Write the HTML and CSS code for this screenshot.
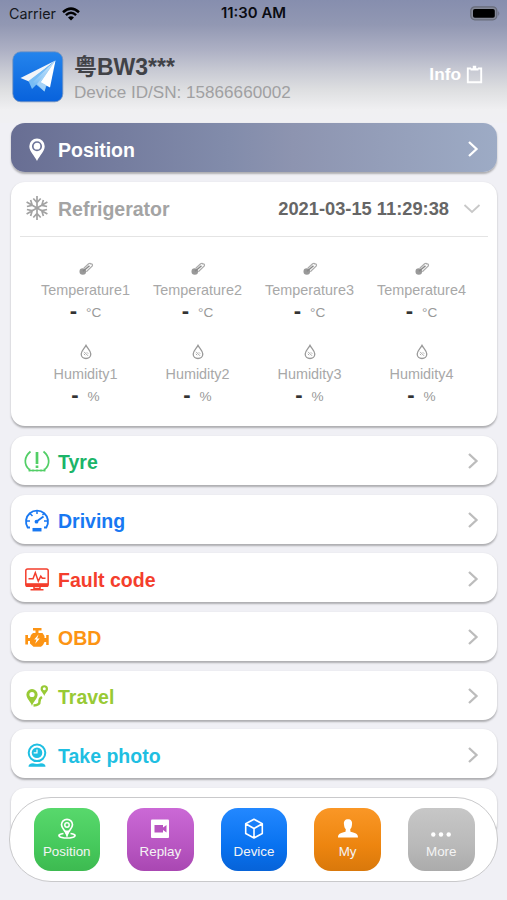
FILE: index.html
```html
<!DOCTYPE html>
<html lang="en">
<head>
<meta charset="utf-8">
<title>Device</title>
<link rel="stylesheet" href="styles.css">
</head>
<body>
<svg class="defs" width="0" height="0">
  <symbol id="chevron" viewBox="0 0 12 18"><path d="M2 2l7.5 7L2 16" fill="none" stroke="currentColor" stroke-width="2.3"/></symbol>
  <symbol id="thermo" viewBox="0 0 16 14"><circle cx="4.8" cy="9.5" r="3.3" fill="#999"/><path d="M5.8 6.2l4.800-4.400q1.600-1 2.200.2 2.300-.3 1.500 2L8.300 9.800" fill="none" stroke="#aaa" stroke-width="1.200"/><path d="M5 9.300l6.500-5.600" stroke="#888" stroke-width="1.500"/></symbol>
  <symbol id="drop" viewBox="0 0 12 16"><path d="M6 1.400C4.600 4.200 1.200 7 1.200 10a4.800 4.500 0 0 0 9.600 0C10.800 7 7.400 4.200 6 1.400z" fill="none" stroke="#999" stroke-width="1.300"/><path d="M4 7.800l4 4M3.800 9.800l1.400 1.400M6.800 8.300l1.400 1.400" stroke="#aaa"/></symbol>
</svg>
<header class="header">
  <div class="status">
    <span class="carrier">Carrier
      <svg width="18" height="14" viewBox="0 0 18 14" fill="none" stroke="#000" stroke-width="2.500"><path d="M1 5.200q8-7.200 16 0M3.900 8.100q5.100-4.600 10.200 0"/><path d="M9 13.400L6 10.400q3-2.400 6 0z" fill="#000" stroke="none"/></svg>
    </span>
    <span class="clock">11:30 AM</span>
    <svg class="battery" width="31" height="15" viewBox="0 0 31 15"><rect x=".8" y=".8" width="26" height="13" rx="4" fill="#858998" stroke="#686c7b" stroke-width="1.300"/><rect x="3" y="3" width="21.800" height="8.800" rx="1.800"/><path d="M28.300 5v5q2-2.500 0-5z" fill="#686c7b"/></svg>
  </div>
  <div class="device">
    <svg class="logo" width="52" height="52" viewBox="0 0 52 52">
      <defs><linearGradient id="sky" x2="0" y2="1"><stop stop-color="#2484ec"/><stop offset="1" stop-color="#0862dc"/></linearGradient><linearGradient id="wing" x2="0" y2="1"><stop stop-color="#d8edfc"/><stop offset="1" stop-color="#5eb0f3"/></linearGradient></defs>
      <rect x=".8" y=".8" width="50" height="50" rx="8" fill="url(#sky)" stroke="#7894bd" stroke-width=".8"/>
      <path d="M43.500 9.500L8.500 27l8.500 3.500z" fill="#f4f5f8"/><path d="M43.500 9.500L16.500 30l3.500 8 4-4z" fill="#78bdf5"/><path d="M43.500 9.500L21 31l11.500 9.500z" fill="url(#wing)"/><path d="M43.500 9.500l-5.500 27-9.500-5z" fill="#fff"/><path d="M43.500 9.500L25 33l7.500 7.500 1.500-6.500-5.500-3z" fill="#a5d2f7"/>
    </svg>
    <div class="identity">
      <h1>粤BW3***</h1>
      <p>Device ID/SN: 15866660002</p>
    </div>
    <div class="info">Info
      <svg width="17" height="19" viewBox="0 0 17 19"><path d="M5 3.500H1.800v13.800h13.400V3.500H12" fill="none" stroke="#fff" stroke-width="1.900"/><path d="M4.500 5.500V3.300h2.300V.8h3.400v2.500h2.300v2.200z" fill="#fff"/></svg>
    </div>
  </div>
</header>
<main class="list">
  <section class="card row position">
    <svg class="icon" viewBox="0 0 26 26"><path d="M13 1.500a7.700 7.700 0 0 0-7.700 7.700C5.300 14.500 10.500 18.500 13 24 15.500 18.500 20.700 14.500 20.700 9.200A7.700 7.700 0 0 0 13 1.500z" fill="#fff"/><circle cx="13" cy="9.200" r="4.200" fill="none" stroke="#6c7499" stroke-width="1.700"/></svg>
    <h2>Position</h2><svg class="chev"><use href="#chevron"/></svg>
  </section>
  <section class="card fridge">
    <div class="row">
      <svg class="icon" viewBox="0 0 26 26" fill="none" stroke="#a2a2a2" stroke-width="1.700">
        <g id="arm"><path d="M13 13V1M9.300 3.500l3.700 4 3.700-4"/></g>
        <use href="#arm" transform="rotate(60 13 13)"/><use href="#arm" transform="rotate(120 13 13)"/><use href="#arm" transform="rotate(180 13 13)"/><use href="#arm" transform="rotate(240 13 13)"/><use href="#arm" transform="rotate(300 13 13)"/>
      </svg>
      <h2>Refrigerator</h2><time>2021-03-15 11:29:38</time>
      <svg class="down" viewBox="0 0 18 12"><path d="M1.500 2L9 9l7.500-7" fill="none" stroke="#c8c8c8" stroke-width="1.800"/></svg>
    </div>
    <div class="sensors">
      <div class="sensor"><svg class="thermo"><use href="#thermo"/></svg><span>Temperature1</span><p><b>-</b><i>°C</i></p></div>
      <div class="sensor"><svg class="thermo"><use href="#thermo"/></svg><span>Temperature2</span><p><b>-</b><i>°C</i></p></div>
      <div class="sensor"><svg class="thermo"><use href="#thermo"/></svg><span>Temperature3</span><p><b>-</b><i>°C</i></p></div>
      <div class="sensor"><svg class="thermo"><use href="#thermo"/></svg><span>Temperature4</span><p><b>-</b><i>°C</i></p></div>
      <div class="sensor"><svg class="drop"><use href="#drop"/></svg><span>Humidity1</span><p><b>-</b><i>%</i></p></div>
      <div class="sensor"><svg class="drop"><use href="#drop"/></svg><span>Humidity2</span><p><b>-</b><i>%</i></p></div>
      <div class="sensor"><svg class="drop"><use href="#drop"/></svg><span>Humidity3</span><p><b>-</b><i>%</i></p></div>
      <div class="sensor"><svg class="drop"><use href="#drop"/></svg><span>Humidity4</span><p><b>-</b><i>%</i></p></div>
    </div>
  </section>
  <section class="card row tyre">
    <svg class="icon" viewBox="0 0 26 26" fill="none" stroke="#52ce66" stroke-width="1.700"><path d="M6.500 2.500C-.2 8-.2 15.500 5.200 20.500M19.500 2.500c6.700 5.500 6.700 13 1.300 18M4.500 21.500h17M5.500 19.500v3M20.500 19.500v3M9 20.500v2M13 20.500v2M17 20.500v2"/><path d="M13 3v12M13 16.500v2.500" stroke-width="2.700"/></svg>
    <h2>Tyre</h2><svg class="chev"><use href="#chevron"/></svg>
  </section>
  <section class="card row driving">
    <svg class="icon" viewBox="0 0 26 26" fill="none" stroke="currentColor" stroke-width="1.900"><path d="M6 19.500H3.700A11 11 0 1 1 22.300 19.500H20"/><path d="M13 2v4M6 5.500l2.500 2.500M20 5.500l-1.500 1.500M2.500 13h3.500M20 13h3.500" stroke-width="1.500"/><path d="M12.500 13.500l7-5"/><circle cx="12.500" cy="13.700" r="1.900" fill="currentColor" stroke="none"/><path d="M8.500 21.700h9" stroke-width="3.500"/></svg>
    <h2>Driving</h2><svg class="chev"><use href="#chevron"/></svg>
  </section>
  <section class="card row fault">
    <svg class="icon" viewBox="0 0 26 26" fill="none" stroke="currentColor" stroke-width="1.500"><rect x="1.800" y="1.900" width="22.400" height="17.300" rx="1.800"/><path d="M2 17.700h22" stroke-width="3"/><path d="M4.500 11.700h4.500l2.300-6 3 8.500 2.500-5 1.500 2H21.500"/><path d="M10 19.200h6v2.300h-6zM6.500 22.700h13"/></svg>
    <h2>Fault code</h2><svg class="chev"><use href="#chevron"/></svg>
  </section>
  <section class="card row obd">
    <svg class="icon" viewBox="0 0 26 26" fill="currentColor"><path d="M9 3h8.500v2.500h-3V8h4l2 3v2h1.700V10h2.500v10h-2.500v-3h-1.700L19 20l-2 1.800H9.500L6 18.500V16H4v3.500H1.300V10H4v3h2l1-3 2-2h2.500V5.500H9z"/><path d="M14.500 9.500l-4.300 5h2.300l-1.300 4.300 4.500-5.300h-2.500z" fill="#fff"/></svg>
    <h2>OBD</h2><svg class="chev"><use href="#chevron"/></svg>
  </section>
  <section class="card row travel">
    <svg class="icon" viewBox="0 0 26 26" fill="currentColor"><path fill-rule="evenodd" d="M8 5a5.600 5.600 0 0 0-5.600 5.600C2.400 15 7 18 8 22c1-4 5.600-7 5.600-11.400A5.600 5.600 0 0 0 8 5zm0 2.900a2.600 2.600 0 1 1 0 5.200 2.600 2.600 0 0 1 0-5.200zM20.300 1.200a3.700 3.700 0 0 0-3.700 3.700c0 2.500 2.900 4 3.700 7 .8-3 3.700-4.500 3.700-7a3.700 3.700 0 0 0-3.700-3.700zm0 2.100a1.500 1.500 0 1 1 0 3 1.500 1.500 0 0 1 0-3z"/><path d="M9.500 21.500q6.500-.5 6-4-.2-3 2.500-4.500" fill="none" stroke="currentColor" stroke-width="2.500"/></svg>
    <h2>Travel</h2><svg class="chev"><use href="#chevron"/></svg>
  </section>
  <section class="card row photo">
    <svg class="icon" viewBox="0 0 26 26" fill="none" stroke="currentColor"><circle cx="13" cy="9.800" r="8.300" stroke-width="2"/><circle cx="13" cy="9.800" r="5.300" fill="currentColor" stroke="none"/><path d="M13 6.500v3.300H9.700" stroke="#fff" stroke-width="1.200"/><path d="M4.500 23.800q0-3.600 4.500-3.600 4 1.500 8 0 4.500 0 4.500 3.600z" fill="currentColor" stroke="none"/></svg>
    <h2>Take photo</h2><svg class="chev"><use href="#chevron"/></svg>
  </section>
  <section class="card row"></section>
</main>
<nav class="tabs">
  <a class="tab green"><svg viewBox="0 0 22 22" fill="none" stroke="#fff"><path d="M11 1.300a5.500 5.500 0 0 0-5.500 5.500C5.500 10.500 9.500 12.500 11 17c1.500-4.500 5.500-6.500 5.500-10.200A5.500 5.500 0 0 0 11 1.300z" stroke-width="1.700"/><path d="M8.300 12.500L11 19l2.700-6.500z" fill="#fff" stroke="none"/><circle cx="11" cy="7" r="2.200" stroke-width="1.500"/><path d="M7.500 15.500c-8 1.300-4.500 4.500 3.500 4.500s11.500-3.200 3.500-4.500" stroke-width="1.700"/></svg>Position</a>
  <a class="tab purple"><svg viewBox="0 0 22 22"><rect x="2" y="1.500" width="18" height="18.500" rx="1" fill="#fff"/><path d="M5.500 7h8.500v2.500L17.500 7v7.500L14 12v2.500H5.500z" fill="#b854c1"/></svg>Replay</a>
  <a class="tab blue"><svg viewBox="0 0 22 22" fill="none" stroke="#fff" stroke-width="1.600" stroke-linejoin="round"><path d="M11 1.300l8.300 4.500v9.700L11 20l-8.300-4.500V5.800zM2.700 5.800l8.300 4.700 8.300-4.700M11 10.500V20"/></svg>Device</a>
  <a class="tab orange"><svg viewBox="0 0 22 22" fill="#fff"><path d="M11 1.200c-3 0-4.500 2-4 5.200.2 2.800 1 4 1.800 4.800l-.3 2.500C3 15 1 16 1 19.500h20c0-3.500-2-4.500-7.500-5.800l-.3-2.500c.8-.8 1.600-2 1.800-4.800.5-3.200-1-5.200-4-5.200z"/></svg>My</a>
  <a class="tab gray"><svg viewBox="0 0 22 22" fill="#fff"><circle cx="3.300" cy="16.500" r="2.200"/><circle cx="11" cy="16.500" r="2.200"/><circle cx="18.700" cy="16.500" r="2.200"/></svg>More</a>
</nav>
</body>
</html>
```
FILE: styles.css
```css
* { box-sizing: border-box; }
body { margin: 0; height: 900px; overflow: hidden; background: #f0f0f5; font-family: "Liberation Sans", "Noto Sans CJK SC", sans-serif; }
h1, h2, p { margin: 0; }
svg { display: block; flex: none; }
.defs { position: absolute; }
.header { height: 123px; background: linear-gradient(#868eae 0, #9298b3 25px, #adb0c4 50px, #c7c9d3 70px, #dedfe1 90px, #f0f0f2 110px, #f0f0f3 123px); }
.status { height: 27px; padding: 0 6px 0 9px; display: grid; grid-template-columns: 1fr auto 1fr; align-items: center; font: 14.300px/27px Inter, sans-serif; color: #151820; }
.carrier { display: flex; gap: 6px; align-items: center; }
.clock { font-weight: 600; font-size: 14.900px; color: #0a0c12; margin-right: 3px; }
.battery { justify-self: end; }
.device { display: flex; align-items: center; padding: 0 24px 0 12px; margin-top: 24px; height: 52px; }
.logo { margin-top: -1px; }
.identity { margin: 4px 0 0 10px; flex: 1; }
.identity h1 { font-size: 23px; line-height: 28px; color: #414247; }
.identity p { font-size: 17.100px; line-height: 24px; color: #a0a0a2; white-space: nowrap; }
.info { display: flex; gap: 5px; align-items: center; font-size: 17.300px; font-weight: bold; color: #fff; margin-top: -5px; }
.info svg { margin-top: -1px; }
.list { display: flex; flex-direction: column; gap: 9.700px; padding: 0 10px 0 11px; }
.card { background: #fff; border-radius: 14px; box-shadow: 0 1.500px 2px rgba(0,0,0,.28); flex: none; height: 49px; }
.row { display: flex; align-items: center; padding: 0 18px 0 13px; }
.icon { width: 26px; height: 26px; margin-top: 4px; }
h2 { font-size: 19.500px; line-height: 24px; margin: 4px 0 0 8px; flex: 1; white-space: nowrap; }
.chev { width: 12px; height: 18px; color: #bcbcbc; margin-top: 2px; }
.position { background: linear-gradient(90deg, #686e93, #828cab 45%, #8d94b0 58%, #9dabc5); color: #fff; }
.position .chev { color: #fff; }
.fridge { height: 244.500px; }
.fridge .row { height: 55px; margin: 0 9px; padding: 0 7px 0 4px; border-bottom: 1.500px solid #e4e4e4; }
.fridge .icon { margin-top: -1px; }
.fridge h2 { color: #a4a4a4; margin-top: 0; }
.fridge time { font-size: 18.300px; font-weight: bold; color: #666; }
.down { width: 18px; height: 12px; margin-left: 14px; }
.sensors { display: grid; grid-template-columns: repeat(4, 1fr); grid-auto-rows: 84.300px; margin: 0 19.500px 0 18.500px; padding-top: 24px; }
.sensor { display: flex; flex-direction: column; align-items: center; color: #a8a8a8; font-size: 14.400px; line-height: 20px; }
.thermo { width: 16px; height: 14px; margin: 1px 0 4px; }
.drop { width: 12px; height: 16px; margin: -1px 0 4px; }
.sensor p { display: flex; align-items: center; gap: 9px; height: 26px; }
.sensor b { color: #333; font-size: 22px; line-height: 22px; margin-top: -3px; }
.sensor i { font-style: normal; font-size: 13.600px; color: #999; margin-top: 1px; }
.tyre { color: #1bb569; }
.driving { color: #1878f2; }
.fault { color: #f43e2c; }
.obd { color: #fc9414; }
.travel { color: #98ca35; }
.photo { color: #1fbfe2; }
.tabs { position: absolute; left: 9px; top: 797px; width: 489px; height: 84.500px; border-radius: 42px; border: 1.500px solid #c9c9cb; background: #fff; display: flex; justify-content: space-between; padding: 10px 22.500px 0 23.500px; }
.tab { width: 66.500px; height: 62.500px; border-radius: 17px; color: #f4f4f4; font-size: 13.400px; line-height: 18px; display: flex; flex-direction: column; align-items: center; padding-top: 10px; gap: 3px; }
.tab svg { width: 22px; height: 22px; }
.green { background: linear-gradient(#58d86c, #46c95c 60%, #3dba50); }
.purple { background: linear-gradient(#cb69d6, #b856c2 60%, #a947b2); }
.blue { background: linear-gradient(#2388ff, #0872f0 60%, #0763d8); }
.orange { background: linear-gradient(#fa9726, #ed850f 60%, #d9780b); }
.gray { background: linear-gradient(#c7c7c7, #b9b9b9 60%, #ababab); }
```
